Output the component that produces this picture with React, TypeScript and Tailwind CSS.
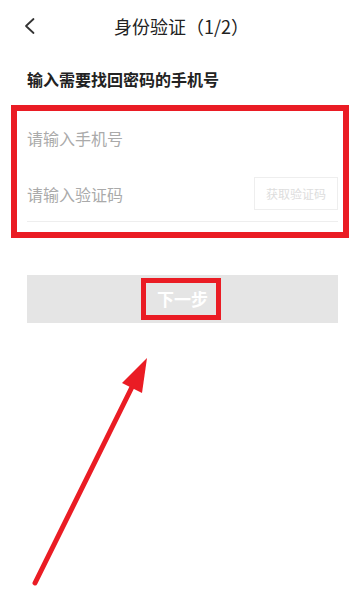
import React from 'react';

const App: React.FC = () => {
    return (
        <div
            className="relative w-[363px] h-[598px] bg-white overflow-hidden"
            style={{ fontFamily: '"Noto Sans CJK SC", "Noto Sans", sans-serif' }}
        >
            {/* Header */}
            <div className="relative h-[52px] flex items-center justify-center">
                <svg className="absolute left-[23px] top-[17px]" width="14" height="18" viewBox="0 0 14 18">
                    <path d="M10.5 2 L3 9 L10.5 16" fill="none" stroke="#333" strokeWidth="1.8" strokeLinecap="round" strokeLinejoin="round" />
                </svg>
                <span className="text-[18px] text-[#222] leading-none">身份验证（1/2）</span>
            </div>

            {/* Subtitle */}
            <div className="pl-[27px] pt-[17px] text-[16px] font-bold text-[#222] leading-[20px]">
                输入需要找回密码的手机号
            </div>

            {/* Form */}
            <div className="mt-[21px] pl-[27px] pr-[25px]">
                <div className="h-[56px] flex items-center text-[16px] text-[#aaa]">请输入手机号</div>
                <div className="h-[56px] flex items-center justify-between border-b border-[#eee]">
                    <span className="text-[16px] text-[#aaa]">请输入验证码</span>
                    <button className="w-[84px] h-[33px] border border-[#eee] text-[12px] text-[#ddd]">获取验证码</button>
                </div>
            </div>

            {/* Next button */}
            <div className="mt-[53px] pl-[27px] pr-[25px]">
                <button className="w-full h-[48px] bg-[#e5e5e5] text-white text-[17px] font-bold">下一步</button>
            </div>

            {/* Annotations */}
            <div className="absolute left-[11px] top-[105px] w-[338px] h-[133px] border-[6px] border-[#ea1c24]" />
            <div className="absolute left-[141px] top-[278px] w-[80px] h-[42px] border-[5px] border-[#ea1c24]" />
            <svg className="absolute left-0 top-0" width="363" height="598" viewBox="0 0 363 598">
                <line x1="35" y1="583" x2="133" y2="385" stroke="#ea1c24" strokeWidth="5" strokeLinecap="round" />
                <polygon points="147,358 122,383 142,393" fill="#ea1c24" />
            </svg>
        </div>
    );
};

export default App;
